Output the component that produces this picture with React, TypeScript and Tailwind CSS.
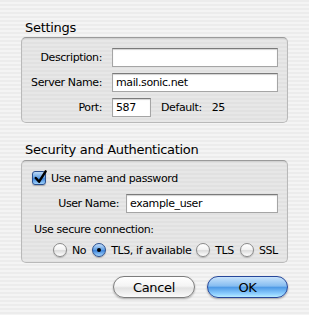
export default function App() {
  const field =
    "h-[19px] bg-white border border-[#a5a5a5] border-t-[#7a7a7a] shadow-[inset_0_1px_1px_rgba(0,0,0,0.18)] px-[3px] flex items-center leading-[13px]"
  const box =
    "rounded-[5px] border border-[#b9b9b9] border-t-[#9a9a9a] bg-[repeating-linear-gradient(to_bottom,#e1e1e1_0px,#e1e1e1_2px,#e7e7e7_2px,#e7e7e7_4px)] shadow-[inset_0_1px_1px_rgba(0,0,0,0.08)]"

  const radios = [
    { label: "No", on: false },
    { label: "TLS, if available", on: true },
    { label: "TLS", on: false },
    { label: "SSL", on: false },
  ]

  return (
    <div className="w-[309px] h-[315px] overflow-hidden px-[21px] pt-[20px] bg-[repeating-linear-gradient(to_bottom,#ececec_0px,#ececec_2px,#f4f4f4_2px,#f4f4f4_4px)] font-['DejaVu_Sans',sans-serif] text-black text-[11px] tracking-[-0.4px]">
      <h2 className="pl-[4px] text-[13px] leading-[15px] tracking-[-0.3px] mb-[2px]">Settings</h2>
      <div className={box + " pt-[10px] pb-[5px] pr-[9px] flex flex-col gap-[6px]"}>
        <div className="flex items-center">
          <span className="w-[80px] text-right leading-[13px]">Description:</span>
          <div className={field + " ml-[10px] flex-1"}></div>
        </div>
        <div className="flex items-center">
          <span className="w-[80px] text-right leading-[13px]">Server Name:</span>
          <div className={field + " ml-[10px] flex-1"}>mail.sonic.net</div>
        </div>
        <div className="flex items-center">
          <span className="w-[80px] text-right leading-[13px]">Port:</span>
          <div className={field + " ml-[10px] w-[39px]"}>587</div>
          <span className="ml-[10px] leading-[13px]">Default:</span>
          <span className="ml-[10px] leading-[13px]">25</span>
        </div>
      </div>

      <h2 className="pl-[4px] mt-[19px] text-[13px] leading-[15px] tracking-[-0.3px] mb-[3px]">
        Security and Authentication
      </h2>
      <div className={box + " pt-[10px] pb-[5px] pl-[10px] pr-[9px] flex flex-col"}>
        <div className="flex items-center gap-[5px] h-[14px]">
          <div className="relative w-[14px] h-[14px] rounded-[3px] border border-[#2a4f8f] bg-[linear-gradient(to_bottom,#bcd9f7_0%,#5d9de3_50%,#3f86dc_55%,#9fd2fb_100%)] shadow-[0_1px_1px_rgba(0,0,0,0.25)]">
            <svg viewBox="0 0 16 16" className="absolute -top-[2px] left-[0px] w-[15px] h-[15px]">
              <path d="M3 8.5 L6.5 12.5 L13.5 1.5" fill="none" stroke="#000" strokeWidth="2.6" strokeLinecap="round" strokeLinejoin="round" />
            </svg>
          </div>
          <span className="leading-[13px]">Use name and password</span>
        </div>
        <div className="flex items-center mt-[9px]">
          <span className="w-[87px] text-right leading-[13px]">User Name:</span>
          <div className={field + " ml-[7px] flex-1"}>example_user</div>
        </div>
        <div className="ml-[2px] mt-[10px] leading-[13px]">Use secure connection:</div>
        <div className="flex items-center ml-[21px] mt-[7px] h-[14px] whitespace-nowrap">
          {radios.map((r, i) => (
            <div key={r.label} className={"flex shrink-0 items-center gap-[5px] " + (i === 0 ? "" : i === 2 ? "ml-[5px]" : "ml-[6px]")}>
              {r.on ? (
                <div className="w-[14px] h-[14px] rounded-full border border-[#2a4f8f] bg-[linear-gradient(to_bottom,#c4defa_0%,#5d9de3_50%,#3f86dc_55%,#a6d6fc_100%)] flex items-center justify-center shadow-[0_1px_1px_rgba(0,0,0,0.25)]">
                  <div className="w-[4px] h-[4px] rounded-full bg-black"></div>
                </div>
              ) : (
                <div className="w-[14px] h-[14px] rounded-full border border-[#8a8a8a] bg-[linear-gradient(to_bottom,#ffffff_0%,#f3f3f3_45%,#dcdcdc_55%,#ffffff_100%)] shadow-[0_1px_1px_rgba(0,0,0,0.2)]"></div>
              )}
              <span className="leading-[13px]">{r.label}</span>
            </div>
          ))}
        </div>
      </div>

      <div className="flex justify-end gap-[12px] mt-[13px]">
        <button className="w-[82px] h-[22px] rounded-full border border-[#7c7c7c] bg-[linear-gradient(to_bottom,#ffffff_0%,#f4f4f4_45%,#e2e2e2_55%,#fbfbfb_100%)] shadow-[0_1px_2px_rgba(0,0,0,0.3)] text-[13px] leading-[15px] tracking-[-0.3px] flex items-center justify-center">
          Cancel
        </button>
        <button className="w-[81px] h-[22px] rounded-full border border-[#27479a] bg-[linear-gradient(to_bottom,#c9e3fb_0%,#86bdf1_45%,#4f9ae6_52%,#8fd0ff_85%,#b8ecff_100%)] shadow-[0_1px_2px_rgba(0,0,0,0.35)] text-[13px] leading-[15px] tracking-[-0.3px] flex items-center justify-center">
          OK
        </button>
      </div>
    </div>
  )
}
